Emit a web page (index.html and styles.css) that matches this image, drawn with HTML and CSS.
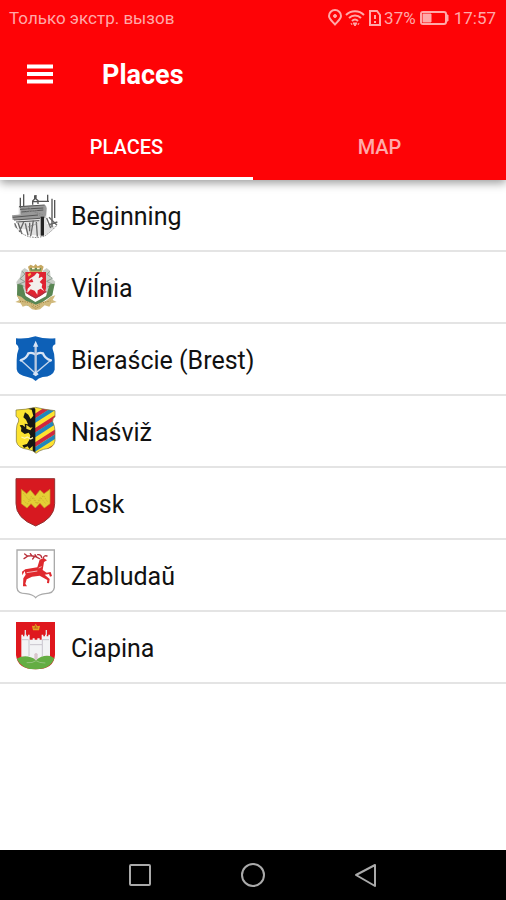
FILE: index.html
```html
<!DOCTYPE html>
<html lang="en">
    <head>
        <meta charset="UTF-8">
        <meta name="viewport" content="width=device-width, initial-scale=1.0">
        <title>Places</title>
        <link rel="stylesheet" href="styles.css">
    </head>
    <body>
        <header class="header">
            <div class="status">
                <span class="carrier" lang="ru">Только экстр. вызов</span>
                <!-- location, wifi, sim -->
                <svg class="pin" width="14" height="18" viewBox="0 0 14 18"><path d="M7 15.500C5 13 1 10 1 7a6 6 0 0 1 12 0c0 3-4 6-6 8.500z"/><circle class="solid" cx="7" cy="7" r="1.500"/></svg>
                <svg class="wifi" width="20" height="18" viewBox="0 0 20 18"><path d="M1 6c5-5 13-5 18 0M4 9c3.500-3.500 8.500-3.500 12 0M7 12c2-2 4-2 6 0"/><path class="solid" d="M8 14h4l-2 3zM6 14l1 2M14 14l-1 2"/></svg>
                <svg class="sim" width="14" height="18" viewBox="0 0 14 18"><path d="M2 2h7l3 4v10H2zM7 6v4M7 12v2"/></svg>
                <span class="percent">37%</span>
                <svg class="battery" width="30" height="14" viewBox="0 0 30 14"><rect x="1" y="1" width="25" height="12" rx="2"/><path class="solid" d="M3 3h8v8H3zM27 4h1v6h-1z"/></svg>
                <span class="time">17:57</span>
            </div>
            <div class="bar">
                <button class="menu" type="button" aria-label="Menu">
                    <svg width="28" height="22" viewBox="0 0 28 22"><path d="M1 2.500h26M1 10h26M1 17.500h26"/></svg>
                </button>
                <h1 class="title">Places</h1>
            </div>
            <div class="tabs">
                <button class="tab active" type="button">PLACES</button>
                <button class="tab" type="button">MAP</button>
            </div>
        </header>

        <ul class="list">
            <li class="item">
                <!-- printing press -->
                <svg class="crest" viewBox="0 0 144 144" fill="none">
                    <path fill="#e0e0e0" d="M20 42h84v70H20zM34 100l80-4 16 8-34 28-48-4z"/>
                    <path fill="#999" d="M24 43l76-4 4 10-2 22-50 8-26-12zM0 70l84-8 16 10v6L2 84z"/>
                    <path stroke="#555" stroke-width="4" d="M25 17v30M35 7v36M107 8v22M120 20v86M128 24v54M62 38V27l6-6V10M78 36V26l-6-5V9M62 29h18M80 28h31"/>
                    <path stroke="#555" stroke-width="3" d="M21 44l77-5M24 52l70-4M28 60l66-6M2 76l76-7M6 84l78-5M12 90l70-4"/>
                    <path stroke="#666" stroke-width="4" d="M8 94l6 14M18 92l12 34M35 90L22 120M40 94l8 36M53 92v26M64 86l-8 46M73 90l3 44M104 78l12 30M111 76l24 24M136 90l-24 8"/>
                    <path stroke="#222" stroke-width="10" d="M91 74v57"/>
                    <path stroke="#888" stroke-width="3" stroke-dasharray="5 3" d="M8 102q16 16 24 24l18 8 24 3 25-5 22-18 14-14M36 48l56 20M48 45l38 27M26 63l50-8M40 108l38-14"/>
                </svg>
                <span class="name">Beginning</span>
            </li>
            <li class="item">
                <!-- arms with crown and supporters -->
                <svg class="crest" viewBox="0 0 144 144" fill="none">
                    <path fill="#c6a760" d="M48 8l8-6 9 5 6-7 6 7 10-5 8 6-5 16H53z"/>
                    <path fill="#6d8b54" d="M54 12h34l-2 8H56z"/>
                    <path fill="#fff5d8" d="M60 11h8v5h-8zM75 11h8v5h-8z"/>
                    <path fill="#c8cdc6" d="M28 20l10-8 12 8v20l-8 48-25-12-4-22 11-14zM114 20l-10-8-12 8v24l10 44 23-15 5-20-14-12z"/>
                    <path stroke="#8f9d91" stroke-width="3" d="M30 22l9 8-15 14 15 9-20 8 18 6M113 22l-8 9 16 12-17 9 20 10-18 7"/>
                    <path fill="#598653" d="M16 60l15 2 10 34 29 18 32-17 11-36 15-2-7 35-39 27-27 6-27-7-13-26z"/>
                    <path fill="#d1ba7d" d="M14 94l14 4 14 12 20 8 10 4 10-4 20-8 14-12 14-4-8 14 12 6-16 4-6 10-14-4-14 12-12 2-12-2-14-12-14 4-6-10-16-4 12-6z"/>
                    <path fill="#df2332" d="M40 24h62v48q0 19-31 31Q40 91 40 72z"/>
                    <path fill="#f3efec" d="M67 35l8-9 7 5-2 12 9-5 4 5-10 11 8 7-2 9 8 12-11-8-9 5-1 13-8-12-12-4-11 12 2-14 10-10-8-8 15-2-4-10-11 8 4-8z"/>
                    <path fill="#f0b640" d="M47 31l8-5 3 5-8 7z"/>
                    <path stroke="#ad3142" stroke-width="4" d="M42 85l29 17 32-20"/>
                    <path stroke="#9b7b38" stroke-width="3" stroke-dasharray="3 4" d="M24 112l29 3 18 13 18-12 26-5M59 126l12 8 13-8"/>
                </svg>
                <span class="name">Viĺnia</span>
            </li>
            <li class="item">
                <!-- bow and arrow -->
                <svg class="crest" viewBox="0 0 144 144" fill="none">
                    <path fill="#0d60b7" d="M12 7q30 3 58-6 28 9 60 6v18q-10 4-8 14 6 14 6 34v28q-5 20-36 22-13 3-21 12-8-9-24-12-31-5-33-23V72q0-20 6-34 1-8-8-14z"/>
                    <path stroke="#d8e4f5" stroke-width="7" stroke-linejoin="round" d="M27 72q17-5 22-20 12-4 22 4 10-8 22-4 5 15 23 21"/>
                    <path stroke="#c5d6ec" stroke-width="4" d="M27 73l43 39 46-39"/>
                    <path stroke="#b8c8df" stroke-width="7" d="M71 28v82"/>
                    <path fill="#d8e4f5" d="M71 14l8 18H63zM71 105l9 10-9 6-9-6z"/>
                    <circle cx="27" cy="73" r="4" fill="#d8e4f5"/>
                    <circle cx="116" cy="73" r="4" fill="#d8e4f5"/>
                </svg>
                <span class="name">Bieraście (Brest)</span>
            </li>
            <li class="item">
                <!-- eagle half and diagonal stripes -->
                <svg class="crest" viewBox="0 0 144 144" fill="none">
                    <defs>
                        <clipPath id="shield"><path d="M12 6q30-1 59-8 28 7 58 10v18q-8 5-7 15 7 14 7 28v30q-3 22-34 25-14 4-23 12-8-9-25-12-31-4-34-24V68q0-18 7-29 2-9-8-14z"/></clipPath>
                    </defs>
                    <g clip-path="url(#shield)">
                        <path fill="#fde330" d="M0-4h144v148H0z"/>
                        <g stroke-width="12">
                            <path stroke="#d0273f" d="M60 30l90-58M60 73l90-58M60 116l90-58M60 159l90-58"/>
                            <path stroke="#2186bd" d="M60 44l90-58M60 87l90-58M60 130l90-58M60 173l90-58"/>
                        </g>
                        <path fill="#fde330" d="M0-4h68v148H0z"/>
                        <path fill="#171713" d="M70 3v134l-8-4V114l-10 9-5-8-11 5-5-8 14-4 8-14 2-12-5-8-12 4-11-8 1-10-5-8 8-1 8 6-1-10 10 2-6-14-8-7 5-15 10 7 7 13 8-10-5-18-10-2 10-12z"/>
                        <path fill="#f5dc3d" d="M51 19l7 1-3 4zM43 50l12 9 7-1-7 9-12-5z"/>
                        <path stroke="#fff4b5" stroke-width="4" d="M28 87l10 4 8-4 10 6 7-4"/>
                    </g>
                    <path stroke="#77734a" stroke-width="2" d="M12 6q30-1 59-8 28 7 58 10v18q-8 5-7 15 7 14 7 28v30q-3 22-34 25-14 4-23 12-8-9-25-12-31-4-34-24V68q0-18 7-29 2-9-8-14z"/>
                </svg>
                <span class="name">Niaśviž</span>
            </li>
            <li class="item">
                <svg class="crest" viewBox="0 0 144 144" fill="none">
                    <path fill="#d71920" stroke="#923332" stroke-width="3" d="M12-4h116v75q0 44-57 67Q12 115 12 71z"/>
                    <path fill="#e4cf36" stroke="#c29825" stroke-width="2" d="M28 28l16 13 11-11 15 18 14-18 12 11 18-13v43L97 84 84 70 70 84 57 71 45 84 28 71z"/>
                    <path stroke="#cdb52c" stroke-width="3" stroke-dasharray="4 4" d="M34 40l20 24 10-12 12 20 18-26 13 20M35 61l11 12 12-24 16 22 11-19 17 20"/>
                </svg>
                <span class="name">Losk</span>
            </li>
            <li class="item">
                <!-- deer -->
                <svg class="crest" viewBox="0 0 144 144" fill="none">
                    <path fill="#fff" stroke="#aaa" stroke-width="4" d="M15-6h112v113q-2 17-27 18-20 2-29 12-9-10-29-12-26-1-27-18z"/>
                    <path fill="#df292e" d="M40 52l36-6 7-23 12-5 10 7-9 5-4 24 12 8 12-2 4 12-6 2-3-8-13 2 15 13-2 13-6-1 1-9-23-13-23 3-16 8-4 13 5 8H33l1-24 7-11-3-11-7 13-1-11z"/>
                    <path stroke="#b92f39" stroke-width="4" stroke-linecap="round" d="M83 20Q68 9 48 12L36 20M46 12l-8-6M60 12l-5-7M68 13l-6 8M75 16l-6-8M89 17q-1-10-12-9M94 18q2-9 11-6"/>
                    <path stroke="#fff" stroke-width="2" d="M80 48l9-4M44 62l32-5"/>
                </svg>
                <span class="name">Zabludaŭ</span>
            </li>
            <li class="item">
                <!-- castle on green hills -->
                <svg class="crest" viewBox="0 0 144 144" fill="none">
                    <path fill="#df171d" d="M12-6h117v99q-3 43-58 43T12 93z"/>
                    <path fill="#64ad43" d="M14 104q12-8 27-9 17 0 31 11 14-12 32-12 11 0 23 9-11 33-56 33-43 0-57-32z"/>
                    <path fill="#f2f3f5" d="M28 43V32h5v5h4v-5h7v5h4v-5h5v15h9v-4h6v4h8v-4h7v4h6V32h5v5h5v-5h5v5h5v-5h5v64q-23-4-42 12-21-15-44-10z"/>
                    <path stroke="#95c27d" stroke-width="3" d="M44 116q18 2 28-6 9 7 28 7"/>
                    <path stroke="#b3adba" stroke-width="2" d="M51 48v48M91 47v50M30 47h20M91 47h20M54 62h36"/>
                    <path fill="#d9c6cc" d="M67 105V91q5-8 10 0v13l-5 4z"/>
                    <path stroke="#e1e1e8" stroke-width="4" d="M40 18v15M103 18v15"/>
                    <path fill="#e7a521" d="M60 5l7 2 4-8 5 8 8-2-3 14H63z"/>
                    <path stroke="#a93119" stroke-width="2" d="M65 12h13M71 4v7"/>
                </svg>
                <span class="name">Ciapina</span>
            </li>
        </ul>

        <nav class="navbar">
            <button class="key" type="button" aria-label="Recent apps">
                <svg width="26" height="26" viewBox="0 0 26 26"><rect x="3" y="3" width="20" height="20" rx="1"/></svg>
            </button>
            <button class="key" type="button" aria-label="Home">
                <svg width="26" height="26" viewBox="0 0 26 26"><circle cx="13" cy="13" r="11"/></svg>
            </button>
            <button class="key" type="button" aria-label="Back">
                <svg width="26" height="26" viewBox="0 0 26 26"><path d="M22 3v21L3 13z"/></svg>
            </button>
        </nav>
    </body>
</html>
```
FILE: styles.css
```css
*{
    margin: 0;
    padding: 0;
    box-sizing: border-box;
}
body{
    min-height: 100vh;
    display: flex;
    flex-direction: column;
    background-color: #fff;
    font-family: Roboto, "Noto Sans", sans-serif;
}
button{
    border: none;
    background: none;
    font-family: inherit;
}
svg{
    display: block;
    flex: none;
}

.header{
    position: relative;
    background-color: #fe0306;
    color: #fff;
    box-shadow: 0 3px 9px rgba(0, 0, 0, 0.4);
}
.status{
    height: 36px;
    padding: 0 10px 0 9px;
    display: flex;
    align-items: center;
    font-size: 17px;
    color: #ffa9a9;
}
.status svg{
    fill: none;
    stroke: #ffa9a9;
    stroke-width: 2;
}
.status .solid{
    fill: #ffa9a9;
    stroke-width: 1;
}
.carrier{
    margin-right: auto;
}
.wifi{
    margin: 0 3px;
}
.percent{
    margin: 0 4px 0 2px;
}
.time{
    margin-left: 4px;
}
.bar{
    height: 78px;
    padding-left: 26px;
    display: flex;
    align-items: center;
}
.menu{
    margin-right: 48px;
}
.menu svg{
    stroke: #fff;
    stroke-width: 4;
}
.title{
    font-size: 27px;
    font-weight: 700;
}
.tabs{
    display: flex;
}
.tab{
    flex: 1;
    height: 66px;
    border-bottom: 3px solid transparent;
    border-top: 3px solid transparent;
    font-size: 20px;
    font-weight: 500;
    color: #ffa9a9;
}
.tab.active{
    color: #fff;
    border-bottom-color: #fff;
}

.list{
    flex: 1;
    list-style: none;
}
.item{
    height: 72px;
    padding: 2px 12px 0;
    display: flex;
    align-items: center;
    gap: 11px;
    border-bottom: 2px solid #e4e4e4;
}
.crest{
    width: 48px;
    height: 48px;
    overflow: visible;
}
.name{
    font-size: 25px;
    color: #111;
}

.navbar{
    height: 50px;
    display: flex;
    justify-content: center;
    align-items: center;
    gap: 87px;
    background-color: #000;
}
.key svg{
    fill: none;
    stroke: #aaa;
    stroke-width: 2;
    stroke-linejoin: round;
}
```
